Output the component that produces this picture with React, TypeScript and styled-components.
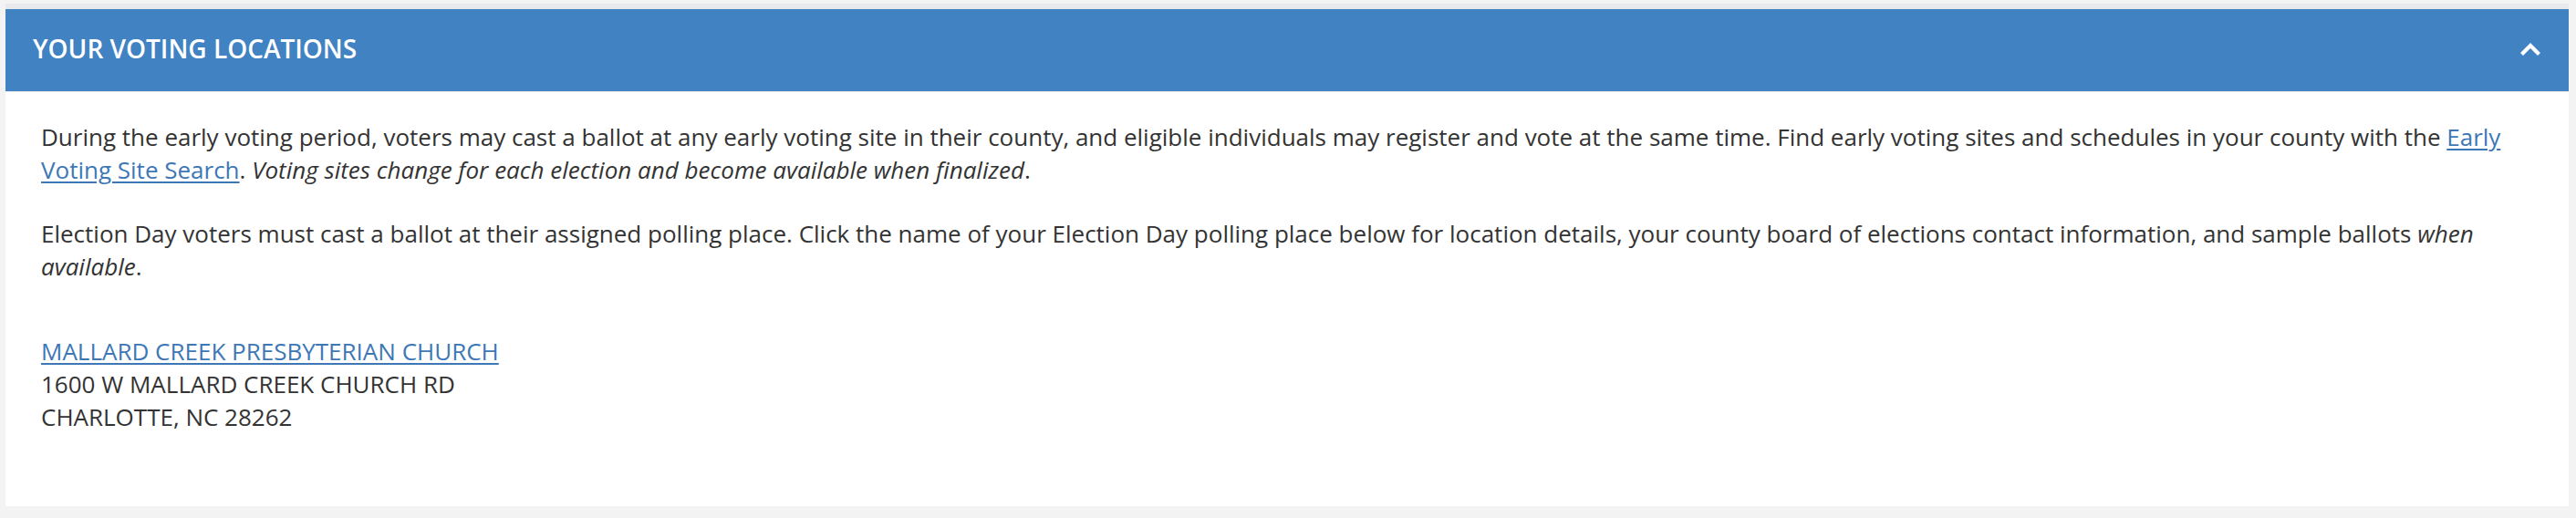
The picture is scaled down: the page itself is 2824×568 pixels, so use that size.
import { createGlobalStyle, styled } from "styled-components";

const GlobalStyle = createGlobalStyle`
  html, body {
    margin: 0;
    padding: 0;
    background: #f3f3f3;
  }
  body {
    font-family: "Open Sans", "Liberation Sans", sans-serif;
    color: #333;
  }
`;

const locations = [
  {
    name: "MALLARD CREEK PRESBYTERIAN CHURCH",
    street: "1600 W MALLARD CREEK CHURCH RD",
    city: "CHARLOTTE, NC 28262",
  },
];

const App = () => {
  return (
    <>
      <GlobalStyle />
      <Page>
        <Panel>
          <PanelHeader>
            <PanelTitle>YOUR VOTING LOCATIONS</PanelTitle>
            <ToggleButton aria-label="collapse">
              <svg width="24" height="16" viewBox="0 0 24 16">
                <polyline
                  points="2.5,13.5 12,4 21.5,13.5"
                  fill="none"
                  stroke="#fff"
                  strokeWidth="4.2"
                  strokeLinejoin="miter"
                  strokeLinecap="butt"
                />
              </svg>
            </ToggleButton>
          </PanelHeader>

          <PanelBody>
            <Paragraph>
              During the early voting period, voters may cast a ballot at any
              early voting site in their county, and eligible individuals may
              register and vote at the same time. Find early voting sites and
              schedules in your county with the{" "}
              <Link href="#">Early Voting Site Search</Link>.{" "}
              <em>
                Voting sites change for each election and become available
                when finalized
              </em>
              .
            </Paragraph>
            <Paragraph>
              Election Day voters must cast a ballot at their assigned polling
              place. Click the name of your Election Day polling place below
              for location details, your county board of elections contact
              information, and sample ballots <em>when available</em>.
            </Paragraph>

            {locations.map((loc) => (
              <Address key={loc.name}>
                <Link href="#">{loc.name}</Link>
                <AddressLine>{loc.street}</AddressLine>
                <AddressLine>{loc.city}</AddressLine>
              </Address>
            ))}
          </PanelBody>
        </Panel>
      </Page>
    </>
  );
};

const Page = styled.div`
  padding: 4px 8px 12px 6px;
`;

// 패널 전체
const Panel = styled.section`
  background: #fff;
  border-top: 6px solid #e8e9ec;
`;

// 파란 헤더
const PanelHeader = styled.div`
  display: flex;
  align-items: center;
  justify-content: space-between;
  height: 85px;
  padding: 0 30px 5px 30px;
  background: #4182c3;
  border-bottom: 1px solid #e6e8ec;
`;

const PanelTitle = styled.h2`
  margin: 0;
  font-size: 28px;
  font-weight: 600;
  color: #fff;
`;

const ToggleButton = styled.button`
  display: flex;
  align-items: center;
  padding: 0;
  margin-top: 3px;
  border: none;
  background: transparent;
  cursor: pointer;
`;

const PanelBody = styled.div`
  padding: 31px 39px 79px 39px;
  font-size: 26px;
  line-height: 1.4;
`;

const Paragraph = styled.p`
  margin: 0 0 33px 0;
  em {
    font-style: italic;
  }
`;

const Link = styled.a`
  color: #3e77b6;
  text-decoration: underline;
  text-decoration-thickness: 2px;
  text-underline-offset: 3px;
`;

const Address = styled.div`
  display: flex;
  flex-direction: column;
  align-items: flex-start;
  margin-top: 56px;
`;

const AddressLine = styled.span`
  display: block;
`;

export default App;
